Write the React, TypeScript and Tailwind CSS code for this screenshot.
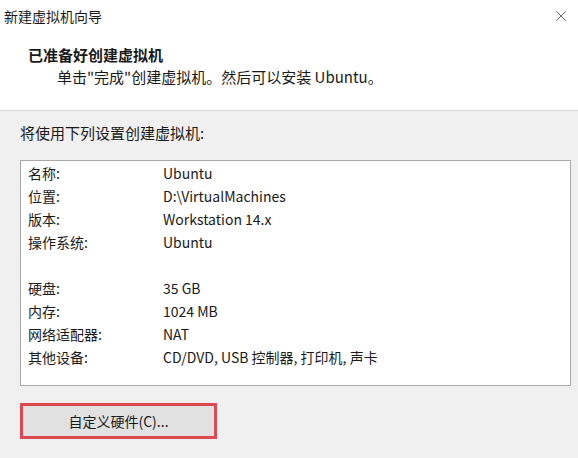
import { X } from 'lucide-react';

const rows: [string, string][] = [
  ['名称:', 'Ubuntu'],
  ['位置:', 'D:\\VirtualMachines'],
  ['版本:', 'Workstation 14.x'],
  ['操作系统:', 'Ubuntu'],
  ['', ''],
  ['硬盘:', '35 GB'],
  ['内存:', '1024 MB'],
  ['网络适配器:', 'NAT'],
  ['其他设备:', 'CD/DVD, USB 控制器, 打印机, 声卡'],
];

export default function App() {
  return (
    <div
      className="w-[578px] h-[458px] overflow-hidden bg-[#f0f0f0] text-[#1a1a1a] flex flex-col"
      style={{ fontFamily: '"Noto Sans CJK SC", "Noto Sans", sans-serif' }}
    >
      {/* Header */}
      <div className="bg-white border-b border-[#d5d5d5] h-[111px] flex flex-col">
        <div className="flex items-center justify-between h-[32px] pl-[4px] pr-[8px]">
          <span className="text-[14px]">新建虚拟机向导</span>
          <X className="w-[18px] h-[18px] text-[#444]" strokeWidth={1.1} />
        </div>
        <div className="pl-[28px] pt-[12px] text-[15px] font-bold leading-[22px]">已准备好创建虚拟机</div>
        <div className="pl-[57px] text-[15px] leading-[22px]">单击"完成"创建虚拟机。然后可以安装 Ubuntu。</div>
      </div>

      {/* Body */}
      <div className="px-[20px] pt-[11px] flex flex-col">
        <div className="text-[15px] leading-[22px]">将使用下列设置创建虚拟机:</div>
        <div className="mt-[16px] w-[551px] h-[226px] bg-white border border-[#a8a8a8] pt-[1px] pl-[7px]">
          {rows.map(([k, v], i) => (
            <div key={i} className="flex h-[23px] items-center text-[14px]">
              <span className="w-[135px]">{k}</span>
              <span>{v}</span>
            </div>
          ))}
        </div>
        <div className="mt-[17px] w-[197px] h-[36px] border-[3px] border-[#dc4950] bg-[#e1e1e1] flex items-center justify-center text-[14px]">
          自定义硬件(C)...
        </div>
      </div>
    </div>
  );
}
